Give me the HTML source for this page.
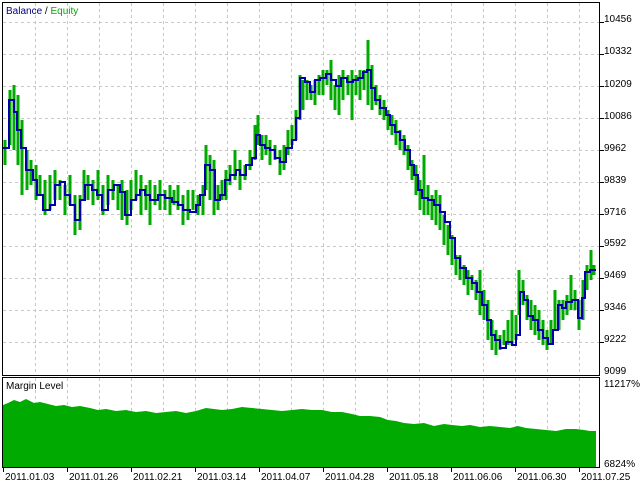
<!DOCTYPE html>
<html><head><meta charset="utf-8"><style>
html,body{margin:0;padding:0;background:#fff;width:644px;height:483px;overflow:hidden}
svg{display:block}
text{font-family:"Liberation Sans",sans-serif;font-size:10px;fill:#000}
</style></head><body>
<svg width="644" height="483" viewBox="0 0 644 483" xmlns="http://www.w3.org/2000/svg">
<rect width="644" height="483" fill="#fff"/>
<g stroke="#c8c8c8" stroke-width="1" stroke-dasharray="3,3">
<path d="M35.5 3V375M67.5 3V375M99.5 3V375M131.5 3V375M163.5 3V375M195.5 3V375M227.5 3V375M259.5 3V375M291.5 3V375M323.5 3V375M355.5 3V375M387.5 3V375M419.5 3V375M451.5 3V375M483.5 3V375M515.5 3V375M547.5 3V375M579.5 3V375"/>
<path d="M35.5 378V467M67.5 378V467M99.5 378V467M131.5 378V467M163.5 378V467M195.5 378V467M227.5 378V467M259.5 378V467M291.5 378V467M323.5 378V467M355.5 378V467M387.5 378V467M419.5 378V467M451.5 378V467M483.5 378V467M515.5 378V467M547.5 378V467M579.5 378V467"/>
<path d="M3 22.5H600M3 54.5H600M3 86.5H600M3 118.5H600M3 150.5H600M3 182.5H600M3 214.5H600M3 246.5H600M3 278.5H600M3 310.5H600M3 342.5H600"/>
</g>
<!-- margin level -->
<polygon fill="#00aa00" points="3,467 3,405 8,403 14,400 20,402 26,399 34,403 40,402 48,404 56,406 64,405 72,407 80,406 90,408 98,410 106,409 116,411 126,410 136,412 146,411 156,413 166,412 176,411 186,413 196,411 206,408 214,409 222,410 232,409 242,407 252,408 262,409 272,410 282,411 292,410 302,409 312,410 322,410 332,412 342,412 352,414 360,416 370,416 380,417 388,420 396,421 404,423 414,424 424,423 434,426 444,424 452,425 462,426 470,425 480,427 490,426 500,427 510,428 518,426 526,428 536,429 546,430 556,431 566,429 576,429 584,430 590,431 596,431 596,467"/>
<!-- equity green spikes -->
<g stroke="#00aa00" stroke-width="3" fill="none">
<path d="M5 140V165M10 90V145M14 85V150M18 95V165M22 120V195M27 150V190M31 160V185M36 165V200M40 175V195M45 180V215M50 175V210M55 170V200M60 180V200M65 185V215M70 175V205M75 195V235M80 195V230M84 170V200M88 175V200M93 180V205M98 170V200M103 185V215M108 175V205M113 180V200M118 185V210M122 180V220M127 190V225M131 180V210M136 170V200M141 175V215M146 185V210M150 180V225M155 185V205M160 180V210M165 190V210M170 185V215M174 190V205M178 185V210M183 195V225M188 190V220M193 190V210M198 195V215M203 185V215M206 145V190M210 155V200M214 160V215M218 185V210M222 180V200M226 170V200M230 165V185M235 150V180M240 160V190M245 165V180M250 150V170M255 125V160M258 115V145M262 135V160M266 135V155M270 140V165M275 145V160M280 150V175M284 145V170M288 130V155M292 125V145M296 110V140M300 75V120M303 80V110M307 80V100M311 85V100M315 80V105M319 75V95M323 70V95M327 70V85M331 60V100M335 85V110M339 75V115M343 70V100M348 75V95M352 70V120M356 75V95M360 70V100M364 70V90M368 40V105M372 65V110M376 85V105M380 95V115M384 100V120M388 110V130M392 115V135M396 120V145M400 130V150M404 135V155M408 145V170M412 160V180M416 165V195M420 180V210M424 155V215M428 185V215M432 195V220M436 190V225M440 195V230M444 215V245M448 225V255M452 235V265M456 255V275M460 255V280M464 265V285M468 270V295M472 275V290M476 280V300M480 270V315M484 290V320M488 300V340M492 320V350M496 330V355M500 335V350M504 330V345M508 320V345M512 310V345M516 315V340M519 270V315M523 280V305M527 295V320M531 300V330M535 305V335M539 310V340M543 320V345M547 330V350M551 320V345M555 290V330M559 300V330M563 300V320M567 295V315M571 275V310M575 290V310M579 300V330M583 280V320M587 265V290M591 250V280M594 265V275"/>
</g>
<!-- balance -->
<path fill="none" stroke="#0000aa" stroke-width="2" d="M3 148H9V100H14V112H17V130H21V148H26V170H33V180H37V195H43V210H50V205H55V185H60V182H65V195H70V205H75V220H80V200H85V185H92V190H97V195H102V210H108V190H114V185H120V192H125V215H131V200H136V195H140V190H145V195H150V200H158V195H165V198H172V202H178V205H183V210H190V212H196V205H200V195H205V165H210V170H215V200H220V195H225V180H230V175H236V170H240V175H246V165H252V158H256V135H260V145H265V148H270V150H275V158H280V162H286V148H292V140H296V118H300V78H305V82H310V92H315V80H320V78H326V74H331V80H336V86H341V78H347V82H353V80H358V78H363V72H367V70H371V88H375V100H380V108H386V115H390V125H395V132H400V140H405V150H410V165H414V175H418V190H422V198H428V200H434V205H440V212H445V222H450V238H455V258H460V268H466V278H472V283H477V292H482V305H487V320H491V335H495V340H500V348H506V342H512V345H516V335H520V292H524V300H528V316H533V320H538V330H543V338H548V344H553V330H558V305H562V308H566V302H572V300H578V318H582V298H585V272H590V270H596"/>
<!-- frames -->
<rect x="2.5" y="2.5" width="597" height="373" fill="none" stroke="#000" stroke-width="1"/>
<rect x="2.5" y="377.5" width="597" height="90" fill="none" stroke="#000" stroke-width="1"/>
<g stroke="#000"><path d="M3.5 468V472M67.5 468V472M131.5 468V472M195.5 468V472M259.5 468V472M323.5 468V472M387.5 468V472M451.5 468V472M515.5 468V472M579.5 468V472M600 22.5H604M600 54.5H604M600 86.5H604M600 118.5H604M600 150.5H604M600 182.5H604M600 214.5H604M600 246.5H604M600 278.5H604M600 310.5H604M600 342.5H604"/></g>
<text x="6" y="14" fill="#000080" style="fill:#000080">Balance <tspan style="fill:#000">/</tspan> <tspan style="fill:#00aa00">Equity</tspan></text>
<text x="6" y="389">Margin Level</text>
<g>
<text x="604" y="22">10456</text><text x="604" y="54">10332</text><text x="604" y="87">10209</text><text x="604" y="119">10086</text><text x="604" y="151">9962</text><text x="604" y="183">9839</text><text x="604" y="215">9716</text><text x="604" y="246">9592</text><text x="604" y="278">9469</text><text x="604" y="310">9346</text><text x="604" y="342">9222</text><text x="604" y="374">9099</text>
<text x="604" y="387">11217%</text><text x="604" y="467">6824%</text>
<text x="5" y="480">2011.01.03</text><text x="69" y="480">2011.01.26</text><text x="133" y="480">2011.02.21</text><text x="197" y="480">2011.03.14</text><text x="261" y="480">2011.04.07</text><text x="325" y="480">2011.04.28</text><text x="389" y="480">2011.05.18</text><text x="453" y="480">2011.06.06</text><text x="517" y="480">2011.06.30</text><text x="581" y="480">2011.07.25</text>
</g>
</svg>
</body></html>
